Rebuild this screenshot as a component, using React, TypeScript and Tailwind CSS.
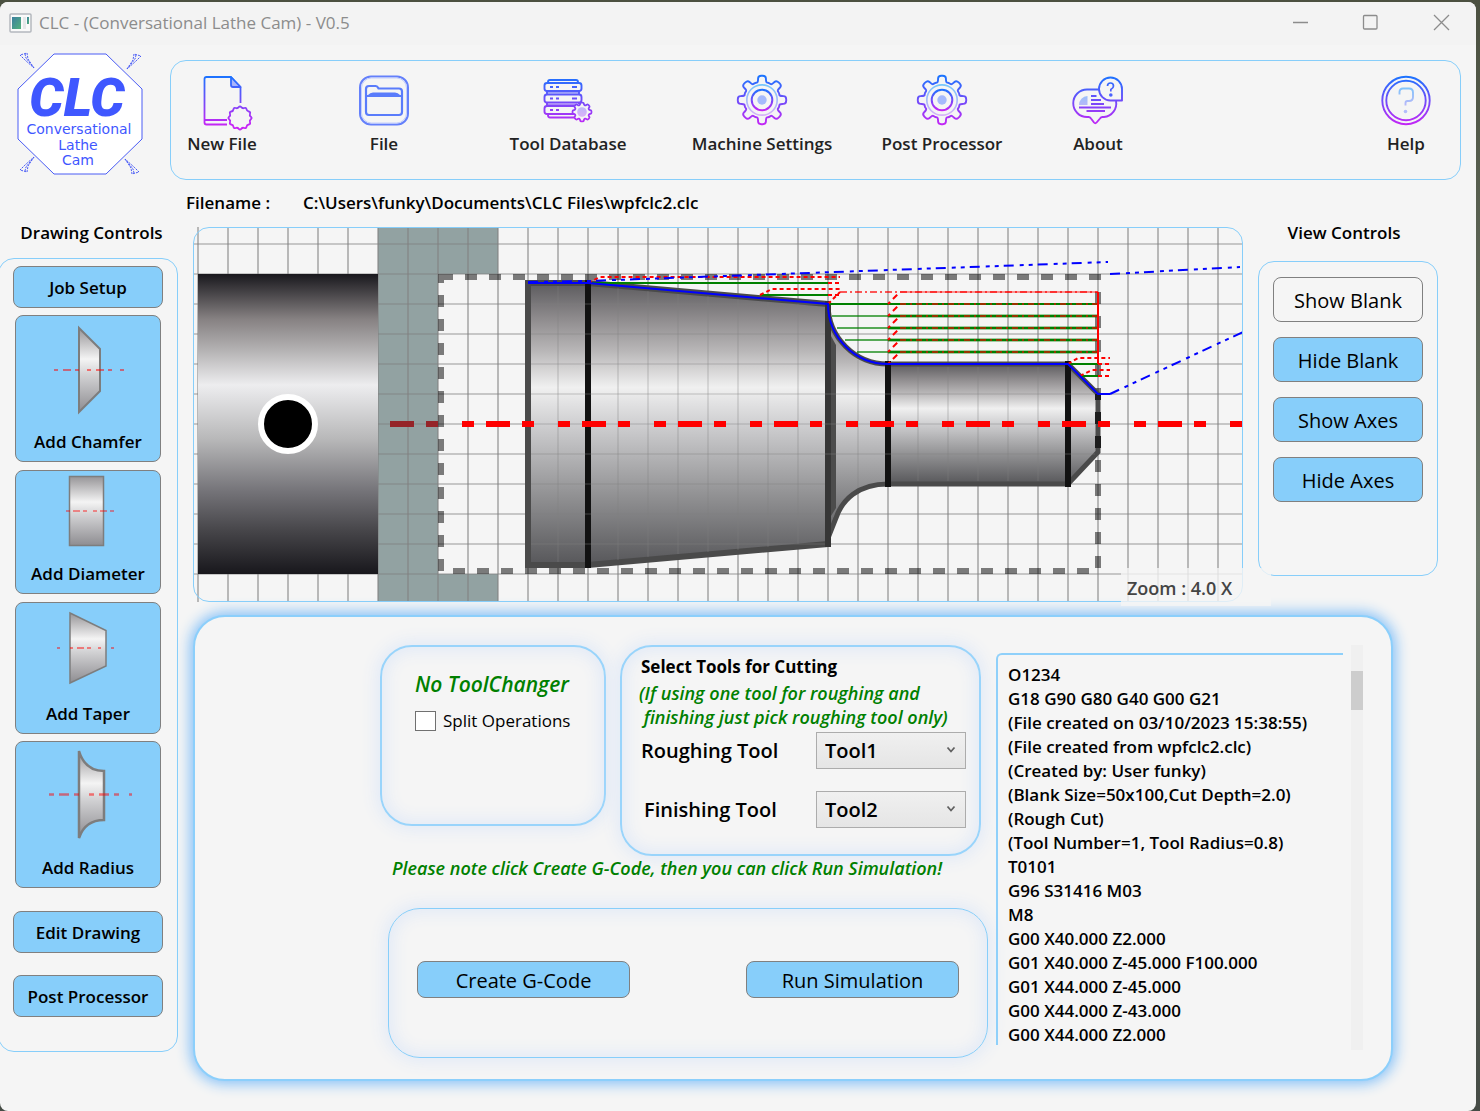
import type { ReactNode } from "react";

const GCODE = `O1234
G18 G90 G80 G40 G00 G21
(File created on 03/10/2023 15:38:55)
(File created from wpfclc2.clc)
(Created by: User funky)
(Blank Size=50x100,Cut Depth=2.0)
(Rough Cut)
(Tool Number=1, Tool Radius=0.8)
T0101
G96 S31416 M03
M8
G00 X40.000 Z2.000
G01 X40.000 Z-45.000 F100.000
G01 X44.000 Z-45.000
G00 X44.000 Z-43.000
G00 X44.000 Z2.000`;

type Point = [number, number];

/* Closed outline through the points, each corner rounded by a quadratic curve. */
function smooth(points: Point[], t: number): string {
  const n = points.length;
  const mix = (a: Point, b: Point, k: number): string =>
    `${(a[0] + (b[0] - a[0]) * k).toFixed(2)} ${(a[1] + (b[1] - a[1]) * k).toFixed(2)}`;
  let d = "";
  points.forEach((p, i) => {
    const prev = points[(i + n - 1) % n];
    const next = points[(i + 1) % n];
    d += `${i ? "L" : "M"}${mix(p, prev, t)}Q${p[0].toFixed(2)} ${p[1].toFixed(2)} ${mix(p, next, t)}`;
  });
  return d + "Z";
}

function radial(cx: number, cy: number, teeth: number, profile: Point[], t: number): string {
  const pts: Point[] = [];
  for (let i = 0; i < teeth; i++) {
    for (const [deg, r] of profile) {
      const a = ((i * 360) / teeth - 90 + deg) * (Math.PI / 180);
      pts.push([cx + r * Math.cos(a), cy + r * Math.sin(a)]);
    }
  }
  return smooth(pts, t);
}

const GEAR = radial(28, 26, 8, [[-9, 24.5], [9, 24.5], [13, 18], [22.5, 18.5], [32, 18]], 0.4);
const SMALL_GEAR = radial(46, 38, 8, [[-10, 9.6], [10, 9.6], [16, 7.4], [29, 7.4]], 0.35);
const SEAL = radial(46, 44, 12, [[0, 12.4], [15, 9.6]], 0.5);

function IconFrame({ children }: { children: ReactNode }) {
  return (
    <svg viewBox="0 0 56 56" className="h-14 w-14 overflow-visible" fill="none" aria-hidden="true">
      {children}
    </svg>
  );
}

function NewFileIcon() {
  return (
    <IconFrame>
      <g stroke="url(#neon)" strokeWidth="1.8" strokeLinejoin="round">
        <path d="M33 50.5H12.500Q10.500 50.500 10.500 48.500V5Q10.500 3 12.500 3H37L46.500 13V29" />
        <path d="M10.500 46H33" />
        <path d="M37 3V11Q37 13 39 13H46.500Z" fill="#a9b5fb" />
        <path d={SEAL} />
      </g>
    </IconFrame>
  );
}

function FileIcon() {
  return (
    <IconFrame>
      <rect x="4" y="2.500" width="48" height="48" rx="11" stroke="#6480fb" strokeWidth="2" />
      <rect x="5.500" y="4" width="45" height="45" rx="10" stroke="#c3cefd" strokeWidth="1" />
      <path
        d="M10 20V15Q10 12 13 12H19.500Q21 12 22 13.500L22.500 14.500H43Q46 14.500 46 17.500V38Q46 41 43 41H13Q10 41 10 38ZM10 22H46"
        stroke="#5a7cfb" strokeWidth="2.200" strokeLinejoin="round"
      />
      <path d="M12 21Q14 18.500 17 18.500H39Q42 18.500 44 21Z" fill="#5a7cfb" />
    </IconFrame>
  );
}

function DatabaseIcon() {
  return (
    <IconFrame>
      <g stroke="url(#neon)" strokeWidth="1.900" strokeLinejoin="round">
        <path d="M8 9V8Q8 6 10 6H36Q38 6 38 8V9" />
        <rect x="4.500" y="9" width="37" height="8" rx="2.500" />
        <rect x="4.500" y="20.500" width="37" height="8" rx="2.500" />
        <path d="M36 40H7Q4.500 40 4.500 37.500V34.500Q4.500 32 7 32H37" />
        <path d="M7 17V20.500M39 17V20.500M7 28.500V32M39 28.500V30M8 40V41Q8 43.500 10 43.500H38" />
        <path d="M10 13H13M16 13H19M32 13H37M10 24.500H13M16 24.500H19M32 24.500H37M10 36H13M16 36H19" />
        <path d="M7 18.800H39M7 30.300H37" strokeWidth="0.800" />
      </g>
      <path d={SMALL_GEAR} transform="translate(-4 0)" fill="#f5f5f5" stroke="url(#neon)" strokeWidth="1.800" />
      <circle cx="42" cy="38" r="4.800" fill="url(#soft)" />
    </IconFrame>
  );
}

function GearIcon() {
  return (
    <IconFrame>
      <path d={GEAR} stroke="url(#neon)" strokeWidth="1.900" strokeLinejoin="round" />
      <circle cx="28" cy="26" r="15.200" stroke="url(#soft)" strokeWidth="1.700" />
      <circle cx="28" cy="26" r="10.300" stroke="url(#neonTight)" strokeWidth="2" />
      <circle cx="28" cy="26" r="4.700" fill="#a5b9fc" />
    </IconFrame>
  );
}

function AboutIcon() {
  return (
    <IconFrame>
      <g stroke="url(#neon)" strokeWidth="1.900" strokeLinejoin="round">
        <path d="M29 15.500H17A13.500 13.500 0 0 0 17 43H18.500Q20 43 21 44.500L24 48.500Q25.300 50 26.600 48.500L30 44.500Q31 43 32.500 43H34A13.500 13.500 0 0 0 46 27" />
        <path d="M52 26.500H40.500A11.500 11.500 0 1 1 52 15Z" />
        <path d="M37.500 12Q37.500 9 40.500 9Q43.500 9 43.500 12Q43.500 14 40.800 15.500V17.500" strokeWidth="1.700" />
        <path d="M21 22H26.500M21 26H31M21 30H34M16.500 37H35" />
        <path d="M9 33.500H41" strokeWidth="2.200" />
      </g>
      <circle cx="40.800" cy="21" r="1.800" fill="#4a62ff" />
      <path d="M9 31A9 9 0 0 1 17.500 22V31Z" fill="url(#soft)" />
    </IconFrame>
  );
}

function HelpIcon() {
  return (
    <IconFrame>
      <circle cx="28" cy="26.500" r="23.700" stroke="url(#neon)" strokeWidth="1.900" />
      <circle cx="28" cy="26.500" r="19.700" stroke="url(#neon)" strokeWidth="1.900" />
      <path
        d="M21.500 20.500V18Q21.500 14.500 25 14.500H31Q35 14.500 35 18.500V23Q35 27 31 27H29.500Q27.500 27 27.500 29V31.500"
        stroke="url(#soft)" strokeWidth="1.900"
      />
      <circle cx="27.500" cy="37.500" r="1.800" fill="#b3bcfc" />
    </IconFrame>
  );
}

/* Gradients shared by the toolbar icons and the drawings. */
function SharedGradients() {
  return (
    <svg className="absolute h-0 w-0" aria-hidden="true">
      <defs>
        <linearGradient id="neon" gradientUnits="userSpaceOnUse" x1="0" y1="2" x2="0" y2="52">
          <stop offset="0" stopColor="#1b74ff" />
          <stop offset="1" stopColor="#c824f5" />
        </linearGradient>
        <linearGradient id="neonTight" gradientUnits="userSpaceOnUse" x1="0" y1="15" x2="0" y2="37">
          <stop offset="0" stopColor="#1b74ff" />
          <stop offset="1" stopColor="#c824f5" />
        </linearGradient>
        <linearGradient id="soft" gradientUnits="userSpaceOnUse" x1="0" y1="10" x2="0" y2="44">
          <stop offset="0" stopColor="#74c6fb" />
          <stop offset="1" stopColor="#dfb0f8" />
        </linearGradient>
        <linearGradient id="steel" x1="0" y1="0" x2="0" y2="1">
          <stop offset="0" stopColor="#5c5b5e" />
          <stop offset="0.120" stopColor="#8c898b" />
          <stop offset="0.240" stopColor="#b8b6b7" />
          <stop offset="0.370" stopColor="#f0f0f0" />
          <stop offset="0.500" stopColor="#cfcfd1" />
          <stop offset="0.750" stopColor="#929294" />
          <stop offset="1" stopColor="#57575a" />
        </linearGradient>
        <linearGradient id="chuck" x1="0" y1="0" x2="0" y2="1">
          <stop offset="0" stopColor="#19181d" />
          <stop offset="0.150" stopColor="#868182" />
          <stop offset="0.250" stopColor="#b2b0b1" />
          <stop offset="0.370" stopColor="#ededef" />
          <stop offset="0.550" stopColor="#b8b8b9" />
          <stop offset="0.720" stopColor="#76757a" />
          <stop offset="0.860" stopColor="#454448" />
          <stop offset="1" stopColor="#18171c" />
        </linearGradient>
        <linearGradient id="thumb" x1="0" y1="0" x2="0" y2="1">
          <stop offset="0" stopColor="#979598" />
          <stop offset="0.370" stopColor="#f4f4f4" />
          <stop offset="0.550" stopColor="#d3d3d5" />
          <stop offset="1" stopColor="#8e8d91" />
        </linearGradient>
      </defs>
    </svg>
  );
}

function Logo() {
  const spark = "M0 0L-6 -9L-7 -15L-14 -13L-9 -8ZM0 0L-8 -10L-9 -14";
  return (
    <svg viewBox="0 0 126 124" className="h-[124px] w-[126px] shrink-0 overflow-visible" role="img" aria-label="CLC Conversational Lathe Cam">
      <path d="M37 1H89L125 36V86L89 121H37L1 86V36Z" fill="#fff" stroke="#4a5cf5" strokeWidth="1" />
      <g fill="none" stroke="#4a5cf5" strokeWidth="1" strokeDasharray="2 1">
        <path d={spark} transform="translate(17 15)" />
        <path d={spark} transform="translate(110 16) scale(-1 1)" />
        <path d={spark} transform="translate(17 104) scale(1 -1)" />
        <path d={spark} transform="translate(108 106) scale(-1 -1)" />
      </g>
      <g fill="#3f57ff" textAnchor="middle">
        <text x="60" y="63" fontFamily="Roboto,'Liberation Sans',sans-serif" fontSize="54" fontWeight="900" fontStyle="italic">CLC</text>
        <g fontFamily="'DejaVu Sans',sans-serif" fontSize="14">
          <text x="62" y="81">Conversational</text>
          <text x="61" y="97">Lathe</text>
          <text x="61" y="112">Cam</text>
        </g>
      </g>
    </svg>
  );
}

const TOOLS = [
  { label: "New File", icon: <NewFileIcon />, box: "w-[70px]" },
  { label: "File", icon: <FileIcon />, box: "ml-[102px] w-[50px]" },
  { label: "Tool Database", icon: <DatabaseIcon />, box: "ml-[102px] w-[114px]" },
  { label: "Machine Settings", icon: <GearIcon />, box: "ml-[67px] w-[140px]" },
  { label: "Post Processor", icon: <GearIcon />, box: "ml-[51px] w-[118px]" },
  { label: "About", icon: <AboutIcon />, box: "ml-[72px] w-[50px]" },
  { label: "Help", icon: <HelpIcon />, box: "ml-auto mr-[29px] w-[50px]" },
];

function Toolbar() {
  return (
    <nav className="mt-[7px] mr-[15px] ml-[27px] flex h-[120px] flex-1 rounded-2xl border border-[#87cefa] pt-[13px] pl-4">
      {TOOLS.map((t) => (
        <button key={t.label} className={`flex flex-col items-center gap-[2px] self-start whitespace-nowrap ${t.box}`}>
          {t.icon}
          <span className="text-[17px] leading-6 font-semibold text-[#222]">{t.label}</span>
        </button>
      ))}
    </nav>
  );
}

function ChamferArt() {
  return (
    <svg viewBox="-4 0 80 90" className="h-[90px] w-20 overflow-visible" aria-hidden="true">
      <path d="M27 3L48 24V66L27 87Z" fill="url(#thumb)" stroke="#7d7d7d" strokeWidth="2" />
      <path d="M2 45H74" stroke="#f00" strokeOpacity=".5" strokeWidth="2" strokeDasharray="4 5 8 4 4 8" />
    </svg>
  );
}

function DiameterArt() {
  return (
    <svg viewBox="-4 0 80 72" className="h-[72px] w-20 overflow-visible" aria-hidden="true">
      <rect x="17.500" y="1.500" width="34" height="69" fill="url(#thumb)" stroke="#7d7d7d" strokeWidth="1.500" />
      <path d="M14 36H62" stroke="#f00" strokeOpacity=".4" strokeWidth="2" strokeDasharray="4 3 7 3 4 6" />
    </svg>
  );
}

function TaperArt() {
  return (
    <svg viewBox="-4 0 80 76" className="h-[76px] w-20 overflow-visible" aria-hidden="true">
      <path d="M18 3L54 20.500V56L18 73Z" fill="url(#thumb)" stroke="#7d7d7d" strokeWidth="1.500" />
      <path d="M5 38H64" stroke="#f00" strokeOpacity=".45" strokeWidth="2" strokeDasharray="3 10 3 4 7 3 4 7" />
    </svg>
  );
}

function RadiusArt() {
  return (
    <svg viewBox="-4 0 84 94" className="h-[94px] w-[84px] overflow-visible" aria-hidden="true">
      <path d="M29 4Q35 24 54 24V73Q35 73 29 91Z" fill="url(#thumb)" stroke="#7d7d7d" strokeWidth="2.500" />
      <path d="M-1 47.500H82" stroke="#f00" strokeOpacity=".5" strokeWidth="2.500" strokeDasharray="5 5 10 5 5 10" />
    </svg>
  );
}

const blueButton = "rounded-lg border border-[#808080] bg-[#87cefa] font-semibold text-black";

function ShapeButton({ label, box, children }: { label: string; box: string; children: ReactNode }) {
  return (
    <button className={`flex w-[146px] flex-col items-center justify-between pb-[7px] text-[17px] leading-6 ${blueButton} ${box}`}>
      {children}
      <span>{label}</span>
    </button>
  );
}

function Sidebar() {
  const wide = `h-[42px] w-[150px] pt-[2px] text-[17px] leading-6 ${blueButton}`;
  return (
    <aside className="w-[178px] shrink-0">
      <h2 className="pl-[5px] text-center text-[17px] leading-6 font-semibold text-black">Drawing Controls</h2>
      <div className="mt-[13px] -ml-[2px] flex flex-col items-center rounded-2xl border border-[#87cefa] pt-[7px] pb-[34px]">
        <button className={wide}>Job Setup</button>
        <ShapeButton label="Add Chamfer" box="mt-[7px] h-[147px] pt-[9px]"><ChamferArt /></ShapeButton>
        <ShapeButton label="Add Diameter" box="mt-2 h-[124px] pt-1"><DiameterArt /></ShapeButton>
        <ShapeButton label="Add Taper" box="mt-2 h-[132px] pt-[7px]"><TaperArt /></ShapeButton>
        <ShapeButton label="Add Radius" box="mt-[7px] h-[147px] pt-[5px]"><RadiusArt /></ShapeButton>
        <button className={`mt-[23px] ${wide}`}>Edit Drawing</button>
        <button className={`mt-[22px] ${wide}`}>Post Processor</button>
      </div>
    </aside>
  );
}

const COLUMNS = Array.from({ length: 35 }, (_, i) => 198 + i * 30);
const ROWS = Array.from({ length: 12 }, (_, i) => 244 + i * 30);
const PASSES = [304, 316, 328, 340, 352];

function LatheDrawing() {
  return (
    <svg viewBox="193 227 1050 375" preserveAspectRatio="xMinYMin slice" className="h-[375px] w-full" role="img" aria-label="Lathe part and tool path">
      {/* chuck jaws behind the grid */}
      <path d="M378 227H498V274H438V574H498V602H378Z" fill="#92a2a2" />
      <g stroke="#808080" strokeWidth="2">
        <path d={COLUMNS.map((x) => `M${x} 227V602`).join("")} strokeOpacity=".52" />
        <path d={ROWS.map((y) => `M193 ${y}H1243`).join("")} strokeOpacity=".4" />
      </g>
      <path d="M390 424H414M426 424H438" stroke="#952428" strokeWidth="6" />
      <rect x="198" y="274" width="180" height="300" fill="url(#chuck)" />
      <circle cx="288" cy="424" r="27" fill="#000" stroke="#fff" strokeWidth="6" />

      {/* blank outline */}
      <rect x="441" y="277" width="657" height="294" fill="none" stroke="#000" strokeOpacity=".5" strokeWidth="6" strokeDasharray="12 12" />

      {/* turned part, one shape per feature */}
      <g fill="url(#steel)">
        <rect x="528" y="283" width="60" height="282" />
        <path d="M588 283L828 304V544L588 565Z" />
        <path d="M828 304A60 60 0 0 0 888 364V484Q852 484 838 512L828 544Z" />
        <rect x="888" y="364" width="180" height="120" />
        <path d="M1068 364L1098 394V452L1068 484Z" />
      </g>
      <path d="M831 336V516L836 508V345Z" fill="#4c4c4c" />
      <g fill="none" stroke="#4a4a4a" strokeWidth="6">
        <path d="M588 283H528V565H588L828 544M588 283L828 304" />
        <path d="M828 304A60 60 0 0 0 888 364H1068L1098 394V452L1068 484H888C858 484 842 500 836 518L828 538" strokeWidth="5" />
      </g>
      <path d="M588 280V568M888 361V487M1068 361V487" stroke="#121212" strokeWidth="6" />
      <path d="M828 301V547" stroke="#363636" strokeWidth="6" />
      <path d="M1098 394V400M1098 412V424M1098 436V448" stroke="#1c1c1c" strokeWidth="6" />

      <g stroke="#808080" strokeWidth="2" strokeOpacity=".22">
        <path d="M558 286V562M618 288V560M648 291V557M678 294V554M708 296V552M738 299V550M768 302V547M798 304V544M918 367V481M948 367V481M978 367V481M1008 367V481M1038 367V481M858 360V488" />
        <path d="M531 304H825M531 334H825M531 364H825M531 394H1095M531 424H1095M531 454H1095M531 484H825M531 514H825M531 544H825" />
      </g>

      {/* spindle axis */}
      <path d="M462 424H1243" stroke="#f00" strokeWidth="6" strokeDasharray="12 12 24 12 12 24" />

      {/* roughing passes */}
      <g fill="none" stroke="#008000" strokeWidth="2">
        <path d="M592 283H828M760 295H828M828 304H1098M1068 364H1098M1080 376H1098" />
        <path d="M832 316H888M837 328H888M845 340H888M857 352H888" strokeOpacity=".65" />
        <path d={PASSES.map((y) => `M888 ${y}H1098`).join("")} />
        <path d={PASSES.slice(1).map((y) => `M888 ${y}H1098`).join("")} strokeWidth="4" strokeOpacity=".35" />
      </g>

      {/* rapid moves */}
      <g fill="none" stroke="#f00" strokeWidth="2">
        <path d="M588 283L600 277H840M760 295L772 289H840M828 283H840M828 295H840" strokeDasharray="4 3" />
        <path d="M828 304L840 292" strokeDasharray="4 3" />
        <path d="M840 292H1098" strokeOpacity=".65" strokeDasharray="7 3 2 3" />
        <path d="M900 292H1098" strokeOpacity=".4" />
        <path d={PASSES.map((y) => `M888 ${y}L900 ${y - 12}`).join("")} strokeDasharray="3 4 6 4" />
        <path d="M888 364L900 352" strokeDasharray="3 4 6 4" />
        <path d={PASSES.map((y) => `M900 ${y}H1098`).join("")} strokeOpacity=".6" strokeDasharray="6 4 2 4" />
        <path d="M1098 292V364" />
        <path d="M1068 364L1078 358H1110M1080 376L1092 370H1110M1098 364H1110M1098 376H1110" strokeDasharray="4 3" />
      </g>

      {/* finishing pass */}
      <g fill="none" stroke="#00f" strokeWidth="2">
        <path d="M528 283H588L828 304A60 60 0 0 0 888 364H1068L1098 394H1110" />
        <path d="M528 282L588 281L1108 262M1110 274L1240 267M1110 394L1243 332" strokeDasharray="10 6 4 5 4 5" />
      </g>
    </svg>
  );
}

function ViewControls() {
  const base = "h-[45px] w-[150px] rounded-lg border border-[#808080] pt-[2px] text-[20px] leading-6 text-black";
  return (
    <aside className="mr-[38px] w-[180px] shrink-0">
      <h2 className="pr-2 text-center text-[17px] leading-6 font-semibold text-black">View Controls</h2>
      <div className="mt-4 flex h-[315px] flex-col items-center gap-[15px] rounded-2xl border border-[#87cefa] pt-[15px]">
        <button className={`bg-[#f5f5f5] ${base}`}>Show Blank</button>
        <button className={`bg-[#87cefa] ${base}`}>Hide Blank</button>
        <button className={`bg-[#87cefa] ${base}`}>Show Axes</button>
        <button className={`bg-[#87cefa] ${base}`}>Hide Axes</button>
      </div>
    </aside>
  );
}

const glow = "rounded-[32px] shadow-[0_0_16px_4px_#e2eaf7,inset_0_0_16px_4px_#e2eaf7]";

function ToolSelect({ id, label, value, indent, gap }: { id: string; label: string; value: string; indent: string; gap: string }) {
  return (
    <div className={`flex items-center justify-between ${gap}`}>
      <label htmlFor={id} className={`text-[20px] leading-6 font-semibold ${indent}`}>{label}</label>
      <div className="relative">
        <select id={id} defaultValue={value} className="h-[37px] w-[150px] appearance-none border border-[#acacac] bg-linear-to-b from-[#f0f0f0] to-[#e5e5e5] pl-2 text-[20px] leading-6 font-semibold text-black">
          <option>Tool1</option>
          <option>Tool2</option>
        </select>
        <svg viewBox="0 0 10 8" className="pointer-events-none absolute top-[14px] right-[10px] h-2 w-[10px]" fill="none" aria-hidden="true">
          <path d="M1.500 1.500L5 5.500L8.500 1.500" stroke="#606060" strokeWidth="1.800" />
        </svg>
      </div>
    </div>
  );
}

function JobPanel() {
  const action = "h-[37px] w-[213px] rounded-lg border border-[#808080] bg-[#87cefa] pt-[2px] text-[20px] leading-6 text-black";
  return (
    <section className="mt-[13px] mr-[83px] flex h-[466px] rounded-[32px] border-2 border-[#8ccffb] bg-[#f5f5f5] pt-7 shadow-[0_0_14px_3px_#84c0f8]">
      <div className="ml-[185px] w-[608px] shrink-0">
        <div className="flex items-start gap-[14px]">
          <div className={`h-[181px] w-[226px] border-2 border-[#99d4fb] pt-[23px] pl-[33px] ${glow}`}>
            <p className="text-[21px] leading-7 font-semibold whitespace-nowrap text-[#008000] italic">No ToolChanger</p>
            <label className="mt-[11px] flex items-center gap-[7px] text-[17px] leading-6 whitespace-nowrap text-black">
              <input type="checkbox" className="h-[20px] w-[21px] appearance-none border border-[#707070] bg-white" />
              Split Operations
            </label>
          </div>
          <div className={`h-[211px] w-[361px] border-2 border-[#99d4fb] pt-2 pr-[13px] pl-[19px] text-black ${glow}`}>
            <h3 className="text-[17px] leading-6 font-bold">Select Tools for Cutting</h3>
            <p className="mt-[2px] -ml-[2px] text-[18px] leading-6 font-semibold whitespace-pre text-[#008000] italic">{"(If using one tool for roughing and\n finishing just pick roughing tool only)"}</p>
            <ToolSelect id="roughing" label="Roughing Tool" value="Tool1" indent="pl-0" gap="mt-[3px]" />
            <ToolSelect id="finishing" label="Finishing Tool" value="Tool2" indent="pl-[3px]" gap="mt-[22px]" />
          </div>
        </div>
        <p className="ml-3 text-[18px] leading-6 font-semibold whitespace-nowrap text-[#008000] italic">Please note click Create G-Code, then you can click Run Simulation!</p>
        <div className={`mt-7 ml-2 flex h-[150px] items-start justify-between border border-[#87cefa] px-7 pt-[52px] ${glow}`}>
          <button className={action}>Create G-Code</button>
          <button className={action}>Run Simulation</button>
        </div>
      </div>
      <textarea
        readOnly
        aria-label="G-Code"
        value={GCODE}
        className="mt-[8px] ml-2 h-[392px] min-w-0 flex-1 resize-none overflow-hidden rounded-tl-md border-t-2 border-l-2 border-[#8fd0fa] bg-transparent pt-2 pl-[10px] text-[17px] leading-6 font-semibold whitespace-pre text-black outline-none"
      />
      <div className="mr-7 ml-2 h-[405px] w-3 bg-[#f0f0f0] pt-[26px]">
        <div className="h-[39px] bg-[#cdcdcd]" />
      </div>
    </section>
  );
}

function TitleBar() {
  return (
    <header className="flex h-[43px] items-center bg-[#f3f3f3] pb-[2px] pl-[9px]">
      <svg viewBox="0 0 23 20" className="h-5 w-[23px]" aria-hidden="true">
        <defs>
          <linearGradient id="screen" x1="0" y1="0" x2="1" y2="1">
            <stop offset="0" stopColor="#3d7f9f" />
            <stop offset="1" stopColor="#52b37c" />
          </linearGradient>
        </defs>
        <rect x="1" y="1" width="21" height="18" rx="1" fill="#fafafa" stroke="#b4b8be" strokeWidth="1.500" />
        <rect x="3" y="4" width="9" height="12" fill="url(#screen)" />
        <rect x="14" y="4" width="3" height="12" fill="#e6e8ea" />
        <rect x="18" y="4" width="2" height="7" fill="url(#screen)" />
      </svg>
      <h1 className="ml-[7px] flex-1 text-[17px] leading-6 text-[#8c8c8c]">CLC - (Conversational Lathe Cam) - V0.5</h1>
      <div className="flex gap-[54px] pr-[26px]">
        {[
          ["Minimize", "M2 8.500H17"],
          ["Maximize", "M2.500 1.500H14Q15 1.500 15 2.500V14Q15 15 14 15H2.500Q1.500 15 1.500 14V2.500Q1.500 1.500 2.500 1.500Z"],
          ["Close", "M1 1L16 16M16 1L1 16"],
        ].map(([name, d]) => (
          <button key={name} aria-label={name}>
            <svg viewBox="0 0 17 17" className="h-[17px] w-[17px]" fill="none" stroke="#8c8c8c" strokeWidth="1.300" aria-hidden="true">
              <path d={d} />
            </svg>
          </button>
        ))}
      </div>
    </header>
  );
}

export default function App() {
  return (
    <div className="flex min-h-screen bg-linear-to-b from-[#4b5040] via-[#6f7a6c] to-[#454b45] pt-[2px] pr-1 font-['Open_Sans','Noto_Sans',sans-serif]">
      <SharedGradients />
      <div className="min-w-0 flex-1 overflow-hidden rounded-lg bg-[#f5f5f5]">
        <TitleBar />
        <div className="flex items-start pt-2 pl-[17px]">
          <Logo />
          <Toolbar />
        </div>
        <p className="mt-[11px] ml-[186px] flex text-[17px] leading-6 font-semibold text-black">
          <span className="w-[117px]">Filename :</span>
          <span>C:\Users\funky\Documents\CLC Files\wpfclc2.clc</span>
        </p>
        <div className="mt-[6px] flex">
          <Sidebar />
          <main className="ml-[15px] min-w-0 flex-1">
            <div className="flex items-start gap-[15px]">
              <div className="relative mt-[6px] min-w-0 flex-1">
                <LatheDrawing />
                <div className="pointer-events-none absolute inset-0 rounded-2xl border border-[#87cefa]" />
                <span className="absolute -right-7 -bottom-1 w-[150px] bg-[#f5f5f5]/80 pt-2 pb-[6px] pl-[6px] text-[18px] leading-6 font-semibold text-[#444]">Zoom : 4.0 X</span>
              </div>
              <ViewControls />
            </div>
            <JobPanel />
          </main>
        </div>
      </div>
    </div>
  );
}
